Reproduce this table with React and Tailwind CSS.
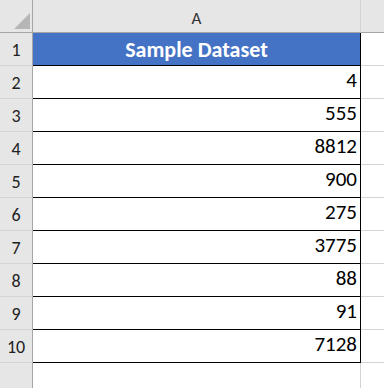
const values = [4, 555, 8812, 900, 275, 3775, 88, 91, 7128];

const font = { fontFamily: "Carlito, 'Open Sans', 'Liberation Sans', sans-serif" };

function RowHead({ children }) {
  return (
    <div className="flex h-[33px] w-[33px] shrink-0 items-center justify-center border-b border-r border-b-[#d4d4d4] border-r-[#a6a6a6] bg-[#e6e6e6] pt-[2px] text-[18px] text-[#222]">
      {children}
    </div>
  );
}

function Filler() {
  return <div className="h-[33px] flex-1 border-b border-[#d4d4d4] bg-white" />;
}

export default function App() {
  return (
    <div className="h-[388px] w-[384px] overflow-hidden bg-white" style={font}>
      {/* column headers */}
      <div className="flex">
        <div className="relative h-[33px] w-[33px] shrink-0 border-b border-r border-[#a6a6a6] bg-[#e6e6e6]">
          <svg className="absolute left-[14px] top-[13px]" width="16" height="16" viewBox="0 0 16 16">
            <polygon points="16,0 16,16 0,16" fill="#b6b6b6" />
          </svg>
        </div>
        <div className="flex h-[33px] w-[328px] shrink-0 items-center justify-center border-b border-r border-b-[#a6a6a6] border-r-[#d4d4d4] bg-[#e6e6e6] pt-[6px] text-[17px] text-[#333]">
          A
        </div>
        <div className="h-[33px] flex-1 border-b border-[#a6a6a6] bg-[#e6e6e6]" />
      </div>

      {/* title row */}
      <div className="flex">
        <RowHead>1</RowHead>
        <div className="flex h-[33px] w-[328px] shrink-0 items-center justify-center border-b border-r border-black bg-[#4472c4] text-[22px] font-bold text-white">
          Sample Dataset
        </div>
        <Filler />
      </div>

      {values.map((v, i) => (
        <div key={i} className="flex">
          <RowHead>{i + 2}</RowHead>
          <div className="flex h-[33px] w-[328px] shrink-0 items-end justify-end border-b border-r border-black pb-[2px] pr-[3px] text-[21px] text-black">
            {v}
          </div>
          <Filler />
        </div>
      ))}

      <div className="flex">
        <div className="h-[33px] w-[33px] shrink-0 border-r border-[#a6a6a6] bg-[#e6e6e6]" />
        <div className="h-[33px] w-[328px] shrink-0 border-r border-[#d4d4d4]" />
        <div className="flex-1" />
      </div>
    </div>
  );
}
